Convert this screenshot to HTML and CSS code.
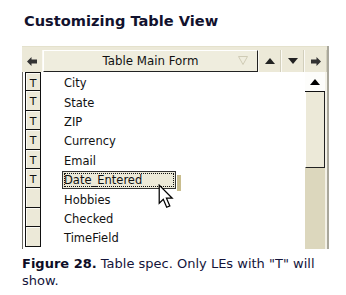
FILE: index.html
```
<!DOCTYPE html>
<html lang="en">

<head>
    <meta charset="UTF-8">
    <title>Customizing Table View</title>
    <link rel="stylesheet" href="styles.css">
</head>

<body>
    <h1 class="title">Customizing Table View</h1>

    <div class="panel">
        <div class="toolbar">
            <div class="tbtn arrow-left">
                <svg width="10" height="9" viewBox="0 0 10 9"><polygon points="0,4.5 4.5,0 4.5,2.5 10,2.5 10,6.5 4.5,6.5 4.5,9" fill="#333"/></svg>
            </div>
            <div class="tbtn form-btn">
                <span class="form-name">Table Main Form</span>
                <svg class="drop" width="10" height="9" viewBox="0 0 10 9"><polygon points="0.5,0.5 9.5,0.5 5,8.5" fill="none" stroke="#cfcbb5"/></svg>
            </div>
            <div class="tbtn small">
                <svg width="10" height="6" viewBox="0 0 10 6"><polygon points="0,6 5,0 10,6" fill="#222"/></svg>
            </div>
            <div class="tbtn small">
                <svg width="10" height="6" viewBox="0 0 10 6"><polygon points="0,0 10,0 5,6" fill="#222"/></svg>
            </div>
            <div class="tbtn small">
                <svg width="10" height="9" viewBox="0 0 10 9"><polygon points="10,4.5 5.5,0 5.5,2.5 0,2.5 0,6.5 5.5,6.5 5.5,9" fill="#333"/></svg>
            </div>
        </div>

        <div class="content">
            <div class="tcol">
                <div class="tbox">T</div>
                <div class="tbox">T</div>
                <div class="tbox">T</div>
                <div class="tbox">T</div>
                <div class="tbox">T</div>
                <div class="tbox">T</div>
                <div class="tbox"></div>
                <div class="tbox"></div>
                <div class="tbox"></div>
            </div>
            <ul class="fields">
                <li>City</li>
                <li>State</li>
                <li>ZIP</li>
                <li>Currency</li>
                <li>Email</li>
                <li><span class="selected">Date_Entered</span>
                    <svg class="cursor" width="16" height="26" viewBox="0 0 14 23"><path d="M1 1 L1 17 L4.6 13.6 L7.6 20.6 L10.4 19.4 L7.4 12.6 L12.5 12.6 Z" fill="#fff" stroke="#000" stroke-width="1.1" stroke-linejoin="miter"/></svg>
                </li>
                <li>Hobbies</li>
                <li>Checked</li>
                <li>TimeField</li>
            </ul>
            <div class="vscroll">
                <div class="sbtn">
                    <svg width="10" height="6" viewBox="0 0 10 6"><polygon points="0,6 5,0 10,6" fill="#000"/></svg>
                </div>
                <div class="thumb"></div>
                <div class="track"></div>
            </div>
        </div>
    </div>

    <p class="caption"><b>Figure 28.</b> Table spec. Only LEs with "T" will show.</p>
</body>

</html>
```

FILE: styles.css
```
body {
    margin: 0;
    background-color: #fff;
    font-family: "DejaVu Sans", Verdana, sans-serif;
}

.title {
    margin: 0;
    padding: 12px 0 0 24px;
    height: 46px;
    box-sizing: border-box;
    font-size: 14.6px;
    font-weight: bold;
    color: #12122e;
}

.panel {
    margin-left: 22px;
    width: 307px;
    height: 203px;
    display: flex;
    flex-direction: column;
    border-right: 2px solid #a9a79b;
    box-sizing: border-box;
}

.toolbar {
    display: flex;
    height: 26px;
    padding-top: 3px;
    box-sizing: border-box;
    background-color: #ece9d8;
    border-top: 1px solid #e4e1cc;
}

.tbtn {
    display: flex;
    align-items: center;
    justify-content: center;
    background-color: #ece9d8;
    border-right: 1px solid #fbfaf4;
}

.arrow-left {
    width: 20px;
}

.form-btn {
    flex: 1;
    position: relative;
    border-right: 1px solid #222;
    border-bottom: 1px solid #222;
    border-left: 1px solid #fff;
    border-top: 1px solid #fff;
    background-color: #efedde;
}

.form-name {
    font-size: 11.8px;
    color: #111;
}

.drop {
    position: absolute;
    right: 9px;
    top: 5px;
}

.small {
    width: 21px;
    border-left: 1px solid #fbfaf4;
    border-right: 1px solid #d2cfbc;
}

.content {
    flex: 1;
    display: flex;
    background-color: #fff;
    border-left: 1px solid #6b6a63;
}

.tcol {
    width: 21px;
    padding-left: 2px;
    box-sizing: border-box;
    background-color: #fff;
}

.tbox {
    width: 16px;
    height: 19.4px;
    box-sizing: border-box;
    border: 1px solid #111;
    border-top: 0;
    background-color: #ece9d8;
    box-shadow: inset 1px 1px 0 #fbfaf4;
    font-size: 11px;
    line-height: 18px;
    padding-top: 2px;
    text-align: center;
    color: #111;
}

.tbox:first-child {
    border-top: 1px solid #111;
}

.fields {
    flex: 1;
    margin: 0;
    padding: 0 0 0 20px;
    list-style: none;
}

.fields li {
    position: relative;
    height: 19.4px;
    box-sizing: border-box;
    padding-top: 3px;
    display: flex;
    align-items: center;
    font-size: 11.5px;
    color: #111;
}

.selected {
    position: relative;
    width: 110px;
    margin-left: -2px;
    padding: 1px;
    border: 1px solid #333;
    outline: 1px dotted #111;
    outline-offset: -3px;
    background-color: #ece9d8;
}

.selected::after {
    content: "";
    position: absolute;
    right: -6px;
    top: 3px;
    bottom: -3px;
    width: 4px;
    background-color: #c9bd8e;
}

.cursor {
    position: absolute;
    left: 94px;
    top: 15px;
}

.vscroll {
    width: 20px;
    display: flex;
    flex-direction: column;
    border-right: 2px solid #f4f2e8;
}

.sbtn {
    height: 19px;
    display: flex;
    align-items: center;
    justify-content: center;
    background-color: #fdfdfb;
    border-bottom: 1px solid #111;
}

.thumb {
    height: 76px;
    background-color: #ece9d8;
    border-right: 1px solid #222;
    border-bottom: 1px solid #222;
    border-left: 1px solid #fff;
    box-sizing: border-box;
}

.track {
    flex: 1;
    background-color: #dcd7bd;
}

.caption {
    margin: 0;
    padding: 6px 0 0 22px;
    width: 300px;
    font-size: 13px;
    line-height: 17px;
    color: #14143a;
}

.caption b {
    font-weight: bold;
    color: #0d0d26;
}
```
